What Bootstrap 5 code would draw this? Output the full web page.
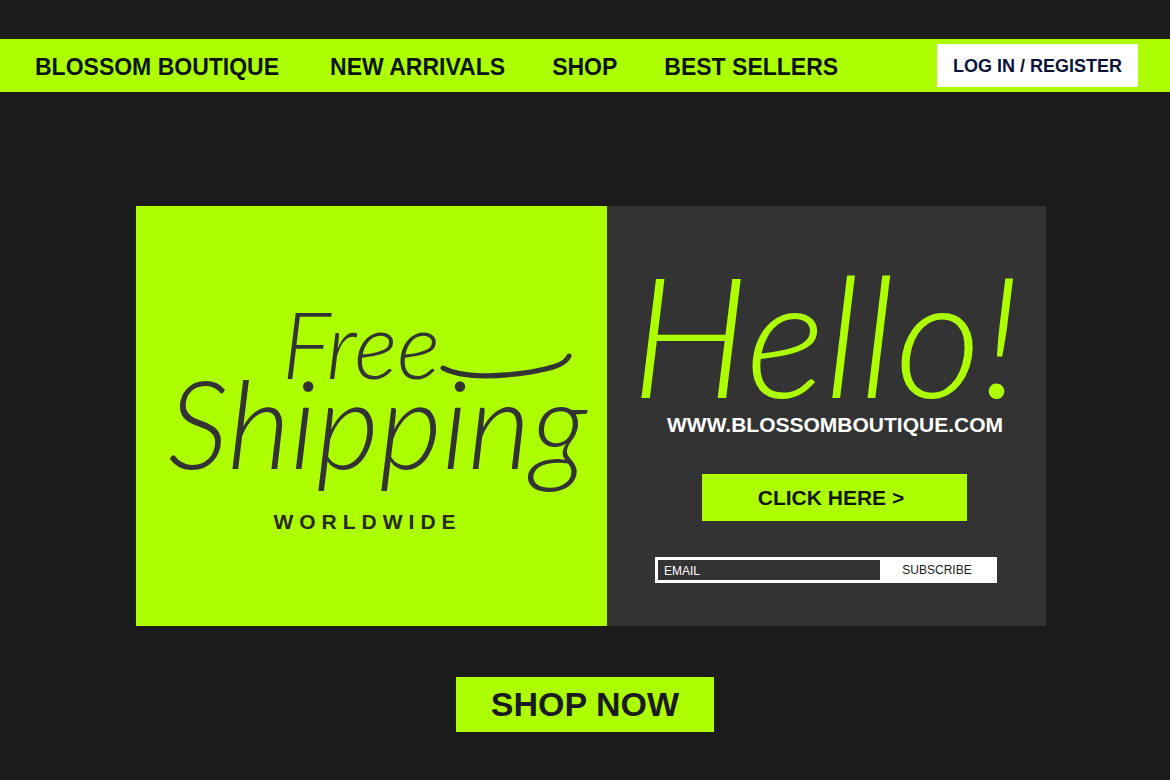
<!DOCTYPE html>
<html lang="en">
<head>
<meta charset="utf-8">
<meta name="viewport" content="width=device-width, initial-scale=1">
<title>Blossom Boutique</title>
<link href="https://cdn.jsdelivr.net/npm/bootstrap@5.3.0/dist/css/bootstrap.min.css" rel="stylesheet">
<style>
  :root { --lime: #adff00; --ink: #1b1b1b; --panel: #333333; }
  body { background: var(--ink); color: var(--ink); font-family: "Liberation Sans", Arial, sans-serif; }
  .site-bar { background: var(--lime); margin-top: 39px; padding: 5px 32px 5px 35px; }
  .site-links { column-gap: 47px; padding-top: 4px; }
  .site-links a { color: #0c1400; font-size: 23px; line-height: 28px; font-weight: 700; text-decoration: none; }
  .site-links li:first-child { margin-right: 4px; }
  .btn { border-radius: 0; border: 0; font-weight: 700; }
  .btn-login, .btn-login:hover { background: #fff; color: #0b1238; font-size: 18px; line-height: 27px; padding: 9px 16px 7px; }
  .btn-lime, .btn-lime:hover { background: var(--lime); color: #101600; }
  .promo { display: grid; grid-template-columns: minmax(0, 471fr) minmax(0, 439fr); margin: 114px 124px 51px 136px; }
  .promo-ship { background: var(--lime); color: var(--panel); padding-top: 92px; padding-bottom: 92px; }
  .promo-hello { background: var(--panel); padding: 52px 49px 43px 48px; }
  .script { font-family: Lato, "Liberation Sans", sans-serif; font-style: italic; font-weight: 300; margin: 0; }
  .script-free { font-size: 92px; line-height: 92px; padding-left: 146px; }
  .script-ship { font-size: 122px; line-height: 64px; text-align: center; padding-left: 12px; }
  .script-hello { font-size: 168px; line-height: 150px; color: var(--lime); white-space: nowrap; }
  .tracked { font-size: 21px; line-height: 24px; font-weight: 700; letter-spacing: 6px; color: #262b12; margin-top: 56px; padding-right: 8px; }
  .offer-url { color: #fff; font-size: 21px; line-height: 28px; font-weight: 700; text-decoration: none; white-space: nowrap; margin-top: 3px; margin-bottom: 35px; padding-left: 12px; }
  .offer-action { padding-left: 16px; }
  .btn-click { width: 265px; font-size: 21px; line-height: 31px; padding: 8px 14px 8px 8px; }
  .mail-form { border: 3px solid #fff; background: #fff; margin-top: 36px; }
  .mail-form .form-control { background: var(--panel); color: #fff; border: 0; border-radius: 0; font-size: 12px; line-height: 14px; padding: 4px 6px 2px; min-height: 0; }
  .mail-form .form-control::placeholder { color: #fff; opacity: 1; }
  .btn-sub, .btn-sub:hover { background: #fff; color: #1b1b1b; font-size: 12px; line-height: 14px; font-weight: 400; width: 114px; padding: 3px 0; }
  .btn-shop, .btn-shop:hover { width: 258px; font-size: 34px; line-height: 39px; padding: 8px; color: var(--ink); }
</style>
</head>
<body>
<header>
  <nav class="site-bar d-flex align-items-center justify-content-between" aria-label="Main">
    <ul class="site-links list-unstyled d-flex flex-wrap mb-0">
      <li><a href="#">BLOSSOM BOUTIQUE</a></li>
      <li><a href="#">NEW ARRIVALS</a></li>
      <li><a href="#">SHOP</a></li>
      <li><a href="#">BEST SELLERS</a></li>
    </ul>
    <button type="button" class="btn btn-login">LOG IN / REGISTER</button>
  </nav>
</header>
<main>
  <section class="promo">
    <div class="promo-ship">
      <div class="script script-free d-flex align-items-baseline">
        <span>Free</span>
        <svg width="132" height="26" viewBox="0 0 132 26" fill="none" aria-hidden="true"><path d="M3 15C22 25 58 24 91 19C112 15 125 12 129 3" stroke="#333333" stroke-width="5" stroke-linecap="round"/></svg>
      </div>
      <div class="script script-ship">Shipping</div>
      <div class="tracked text-center">WORLDWIDE</div>
    </div>
    <div class="promo-hello">
      <h1 class="script script-hello d-flex justify-content-center">Hello!</h1>
      <a href="#" class="offer-url d-block">WWW.BLOSSOMBOUTIQUE.COM</a>
      <div class="offer-action text-center">
        <button type="button" class="btn btn-lime btn-click">CLICK HERE &gt;</button>
      </div>
      <form class="mail-form d-flex">
        <input type="email" class="form-control" placeholder="EMAIL" aria-label="Email">
        <button type="submit" class="btn btn-sub flex-shrink-0">SUBSCRIBE</button>
      </form>
    </div>
  </section>
  <div class="text-center">
    <button type="button" class="btn btn-lime btn-shop">SHOP NOW</button>
  </div>
</main>
<script src="https://cdn.jsdelivr.net/npm/bootstrap@5.3.0/dist/js/bootstrap.bundle.min.js"></script>
</body>
</html>
